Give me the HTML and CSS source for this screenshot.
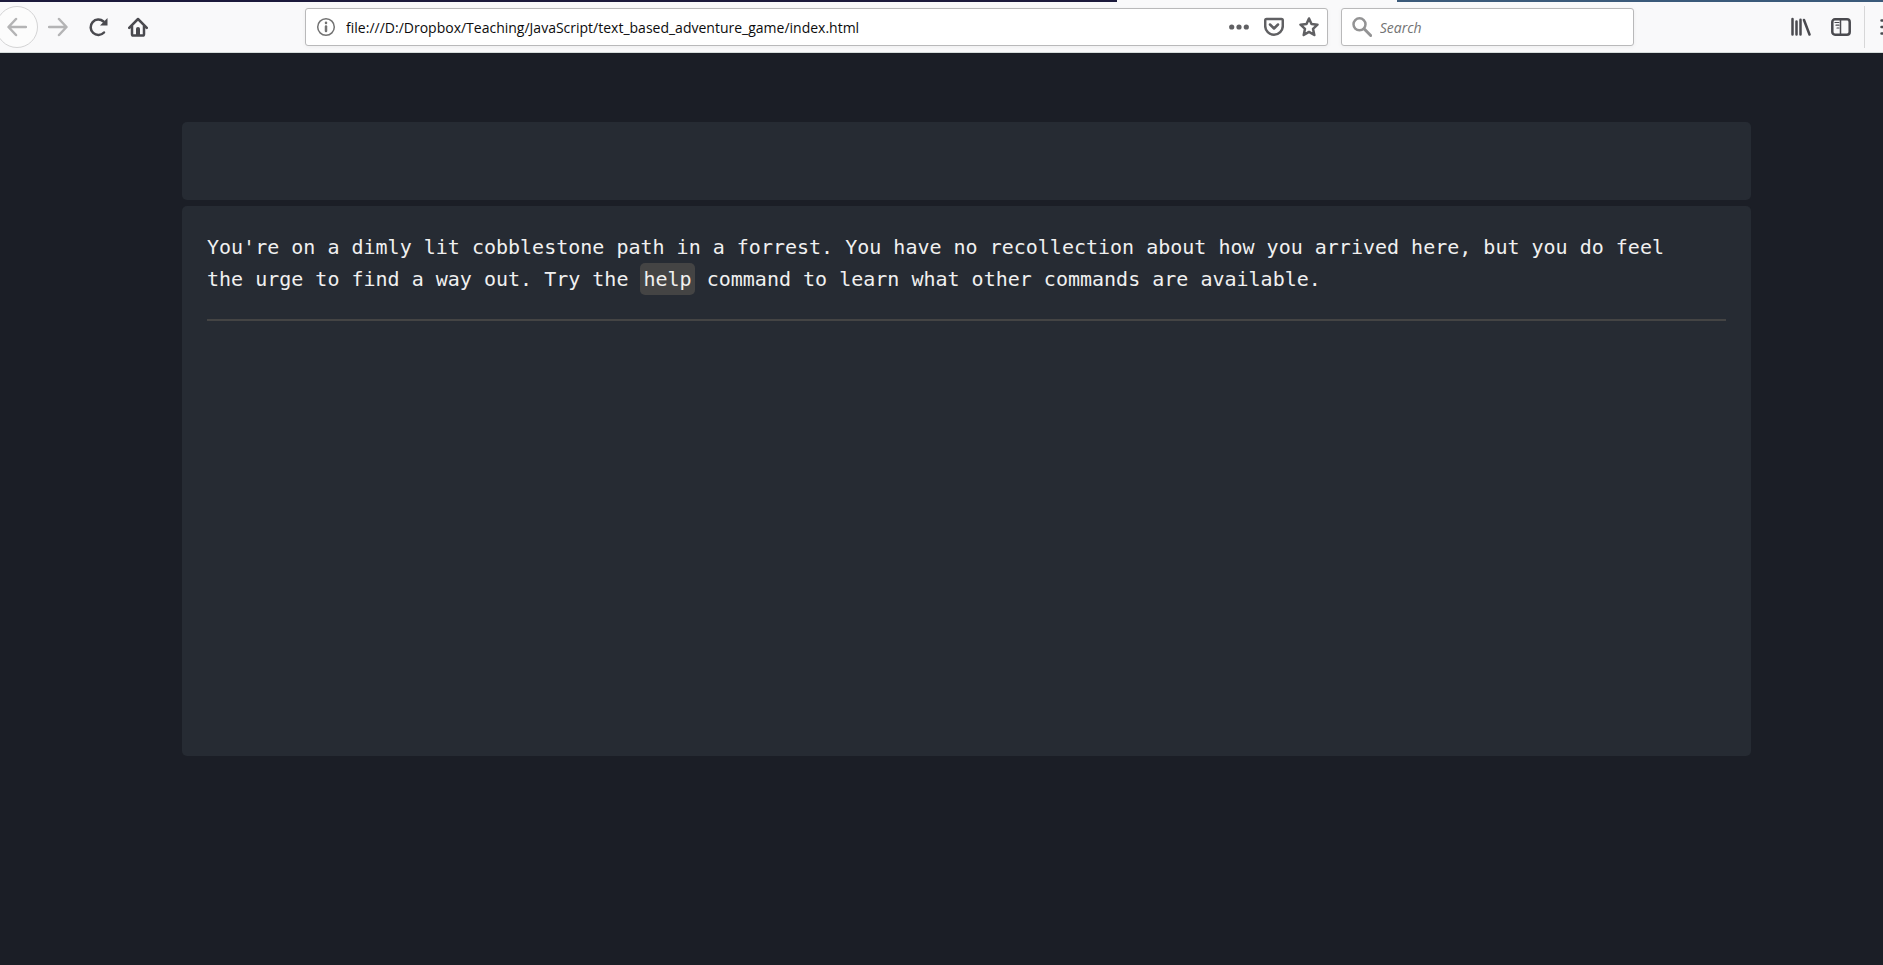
FILE: index.html
```
<!DOCTYPE html>
<html lang="en">
<head>
<meta charset="utf-8">
<title>Text Based Adventure Game</title>
<link rel="stylesheet" href="styles.css">
</head>
<body>
<header class="browser">
  <div class="tabs"><span class="tabs-left"></span><span class="tab-active"></span><span class="tabs-right"></span></div>
  <div class="toolbar">
    <nav class="group nav">
      <button class="tool back" aria-label="Back"><svg class="icon faint" viewBox="0 0 20 20"><path d="M19 10H2M9 2L1.500 10L9 18"/></svg></button>
      <button class="tool" aria-label="Forward"><svg class="icon faint" viewBox="0 0 20 20"><path d="M1 10H18M11 2L18.500 10L11 18"/></svg></button>
      <button class="tool" aria-label="Reload"><svg class="icon" viewBox="0 0 20 20"><path d="M15.500 4.500A7.700 7.700 0 1 0 16 15.500"/><path d="M19.500 1V8.500H12Z" fill="#4a4a4f" stroke="none"/></svg></button>
      <button class="tool" aria-label="Home"><svg class="icon" viewBox="0 0 20 20"><path d="M1.200 10.800L10 2L18.800 10.800M4 9V17.200Q4 18.500 5.300 18.500H14.700Q16 18.500 16 17.200V9"/><path d="M8 18V11.500Q8 10 10 10T12 11.500V18Z" fill="#4a4a4f" stroke="none"/></svg></button>
    </nav>
    <span class="spacer"></span>
    <div class="field address">
      <svg class="icon mid" viewBox="0 0 20 20"><circle cx="10" cy="10" r="8.300" stroke-width="1.500"/><path d="M10 9.500V14" stroke-width="2.500"/><path d="M10 5.800V6" stroke-width="2.500"/></svg>
      <input class="field-input" type="text" aria-label="Address" value="file:///D:/Dropbox/Teaching/JavaScript/text_based_adventure_game/index.html">
      <button class="action" aria-label="Page actions"><svg class="icon soft" viewBox="0 0 20 20"><g fill="#606063" stroke="none"><circle cx="2.700" cy="10" r="2.600"/><circle cx="10" cy="10" r="2.600"/><circle cx="17.300" cy="10" r="2.600"/></g></svg></button>
      <button class="action" aria-label="Save to Pocket"><svg class="icon soft" viewBox="0 0 20 20"><path d="M2.500 2H17.500Q18.800 2 18.800 3.300V9A8.800 8.800 0 0 1 1.200 9V3.300Q1.200 2 2.500 2ZM6 7.500L10 11.500L14 7.500"/></svg></button>
      <button class="action" aria-label="Bookmark"><svg class="icon soft" viewBox="0 0 20 20"><path d="M10 1.500L12.500 7L18.500 7.700L14 11.800L15.300 18L10 14.900L4.700 18L6 11.800L1.500 7.700L7.500 7Z"/></svg></button>
    </div>
    <div class="field search">
      <svg class="icon pale" viewBox="0 0 20 20"><circle cx="7.500" cy="7.300" r="6"/><path d="M12 11.800L18.700 18.500" stroke-width="3"/></svg>
      <input class="field-input" type="text" aria-label="Search" placeholder="Search">
    </div>
    <span class="spacer"></span>
    <div class="group end">
      <button class="tool" aria-label="Library"><svg class="icon" viewBox="0 0 20 20"><path d="M1.500 2V17.500M5.500 4.500V17.500M9.500 2.800V17.500M13 3L18.500 17.500"/></svg></button>
      <button class="tool" aria-label="Sidebars"><svg class="icon" viewBox="0 0 20 20"><rect x="1.300" y="2.300" width="17.400" height="15.400" rx="2.700"/><path d="M9.500 2V18" stroke-width="1.500"/><path d="M4 5.500H8M5 8.200H8M6 11H8" stroke-width="1.200"/></svg></button>
      <span class="divider"></span>
      <button class="tool" aria-label="Menu"><svg class="icon" viewBox="0 0 20 20"><path d="M1.500 3.500H18.500M1.500 10H18.500M1.500 16.500H18.500"/></svg></button>
    </div>
  </div>
</header>
<main class="game">
  <input class="panel command" type="text" aria-label="Command">
  <section class="panel story">
    <p class="message">You're on a dimly lit cobblestone path in a forrest. You have no recollection about how you arrived here, but you do feel<br>the urge to find a way out. Try the <code class="keyword">help</code> command to learn what other commands are available.</p>
    <hr class="rule">
  </section>
</main>
</body>
</html>
```
FILE: styles.css
```
* { box-sizing: border-box; }

body {
  margin: 0;
  min-height: 100vh;
  background: #1b1e26;
  overflow-x: hidden;
}

.browser {
  background: #f9f9fa;
  border-bottom: 1px solid #d5dcda;
  overflow: hidden;
}

.tabs { display: flex; height: 2px; }
.tabs-left { flex: 1117; background: #1c1a3c; }
.tab-active { flex: 280; }
.tabs-right { flex: 486; background: #3b5a7a; }

.toolbar {
  display: flex;
  align-items: center;
  height: 50px;
}

.group { display: flex; align-items: center; flex: none; }
.nav { margin-left: -4px; }
.end { margin-right: -27px; }
.spacer { flex: 147 1 0; }

.tool, .action {
  display: flex;
  align-items: center;
  justify-content: center;
  flex: none;
  padding: 0;
  border: 0;
  background: none;
}
.tool { width: 40px; height: 42px; }
.back {
  width: 42px;
  border: 1px solid #d4d4d5;
  border-radius: 50%;
  background: #fcfcfc;
}
.action { width: 35px; height: 36px; }

.icon {
  flex: none;
  width: 20px;
  height: 20px;
  fill: none;
  stroke: #4a4a4f;
  stroke-width: 2.5;
  stroke-linecap: round;
  stroke-linejoin: round;
}
.faint { stroke: #b4b4b5; }
.mid { stroke: #737373; }
.soft { stroke: #606063; }
.pale { stroke: #939394; }

.field {
  display: flex;
  align-items: center;
  height: 38px;
  min-width: 0;
  border: 1px solid #b9b9ba;
  border-radius: 3px;
  background: #fff;
  box-shadow: 0 1px 4px rgba(0, 0, 0, 0.05);
}
.address { flex: 1010 1 12px; padding-left: 10px; }
.search { flex: 281 1 12px; margin-left: 13px; padding-left: 10px; }

.field-input {
  flex: 1;
  min-width: 0;
  margin-left: 8px;
  padding: 0;
  border: 0;
  outline: 0;
  background: none;
  color: #0c0c0d;
  font: 14px "Open Sans", "Noto Sans", sans-serif;
}
.address .field-input { margin-left: 10px; }
.field-input::placeholder { color: #737373; font-style: italic; opacity: 1; }

.divider { width: 1px; height: 42px; margin: 0 5px 0 3px; background: #d7d7d8; }

.game {
  display: flex;
  flex-direction: column;
  gap: 6px;
  padding: 69px 132px 0 182px;
  font: 20px/32px "DejaVu Sans Mono", "Liberation Mono", monospace;
  color: #f0f0f0;
}

.panel {
  width: 100%;
  padding: 23px 25px;
  border: 0;
  border-radius: 5px;
  background: #262b33;
}
.command { color: inherit; font: inherit; outline: 0; }
.story { min-height: 550px; padding: 25px; }

.message { margin: 0 0 24px; }

.keyword {
  display: inline-block;
  padding: 0 3px;
  border-radius: 5px;
  background: #444;
  font: inherit;
}

.rule { height: 2px; margin: 0; border: 0; background: #444; }
```
